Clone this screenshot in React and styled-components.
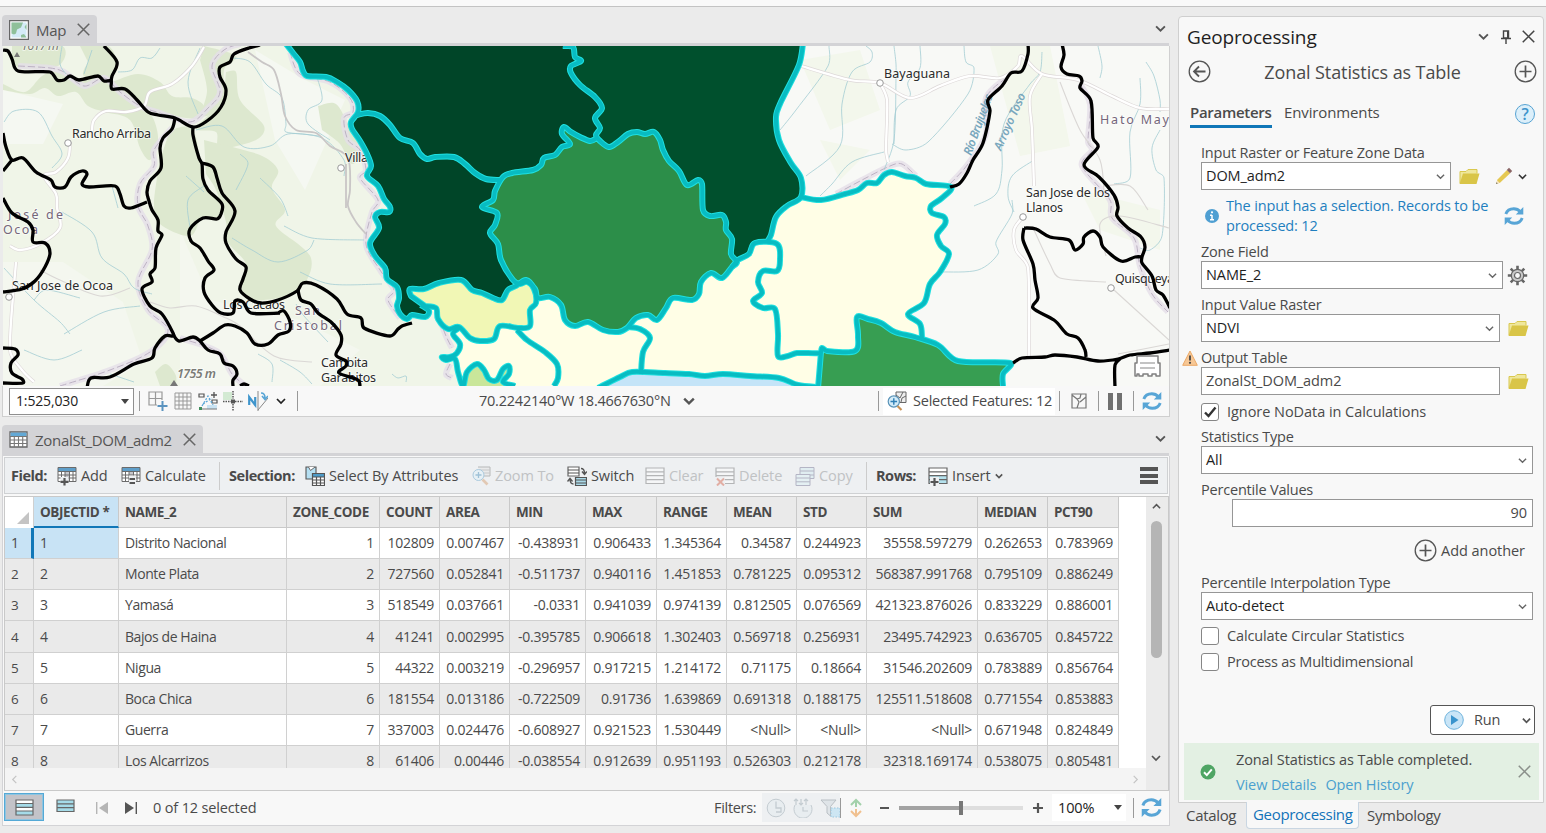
import React from 'react';
import styled, { createGlobalStyle } from 'styled-components';

const Global = createGlobalStyle`
  * { box-sizing: border-box; }
  body {
    margin: 0;
    overflow: hidden;
    background: #ebebeb;
    color: #4a4a4a;
    font: 14.5px/20px "Open Sans", "Noto Sans", sans-serif;
    letter-spacing: -0.15px;
    white-space: nowrap;
  }
  svg { display: block; flex: none; }
`;

/* ---------- icons ---------- */

const Icon = ({ s = 20, w, h, children, ...rest }) => (
  <svg width={w || s} height={h || s} viewBox={`0 0 ${w || s} ${h || s}`} fill="none" {...rest}>{children}</svg>
);
const Chevron = ({ c = '#555', w = 1.7, s = 10 }) => (
  <svg width={s} height={s} viewBox="0 0 10 10" fill="none"><path d="M1 3l4 4 4-4" stroke={c} strokeWidth={w} /></svg>
);
const Cross = ({ s = 13, c = '#666', w = 1.4 }) => (
  <svg width={s} height={s} viewBox="0 0 12 12" fill="none"><path d="M.7.7l10.6 10.6M11.3.7L.7 11.3" stroke={c} strokeWidth={w} /></svg>
);
const MapTabIcon = () => (
  <Icon>
    <path d="M.6.6h18.8v18.8H.6z" fill="#fff" stroke="#666" strokeWidth="1.2" />
    <path d="M2.500 2.500h15v15h-15z" fill="#d4ebf7" />
    <path d="M2.500 2.500H14l-2 5-4 2-1 4-2 1-2.500-1zM12 15l3-1 2.500 3.500H12zM17.500 4l-2 3 2 3z" fill="#8fc09a" />
  </Icon>
);
const TableIcon = () => (
  <Icon w={19} h={17}>
    <path d="M1 1h17v15H1z" fill="#fff" stroke="#666" strokeWidth="1.300" />
    <path d="M1.600 1.600h15.800V5H1.600z" fill="#63a9d6" />
    <path d="M1 5.500h17M1 9h17M1 12.500h17M5.300 5v11M9.500 5v11M13.700 5v11" stroke="#777" strokeWidth="1.100" />
  </Icon>
);
const FieldIcon = ({ calc }) => (
  <Icon>
    <path d="M1 1.500h18v14H1z" fill="#fff" />
    <path d="M1 1.500h18v4H1z" fill="#5f9fca" />
    <path d="M8 5.500h5v10H8z" fill="#c7c7cc" />
    <path d="M1 1.500h18v14H1zM1 5.500h18M1 9h18M1 12h18M4.500 5.500v10M8 5.500v10M12.500 5.500v10M16 5.500v10" stroke="#6b6b6b" />
    {calc ? <path d="M8 9.500h7v10H8z" fill="#eef0f2" /> : <path d="M3.500 11h8v9h-8z" fill="#eef0f2" />}
    {calc ? <path d="M8.500 13h5.500M8.500 17h5.500" stroke="#555" strokeWidth="2" /> : <path d="M7.500 12v7.500M3.500 15.800h8" stroke="#555" strokeWidth="2.200" />}
  </Icon>
);
const SelectAttrIcon = () => (
  <Icon>
    <path d="M8 13H1V1h10v6" fill="#b5dff2" stroke="#555" strokeWidth="1.100" />
    <path d="M3.500 1l2 3.500L10 1" fill="#fff" stroke="#666" />
    <path d="M7.500 7.500h12v12h-12z" fill="#fff" />
    <path d="M7.500 7.500h12V11h-12z" fill="#4d9bc8" />
    <path d="M7.500 7.500h12v12h-12zM7.500 11h12M7.500 14h12M7.500 17h12M11.500 11v8.500M15.500 11v8.500" stroke="#555" strokeWidth="1.200" />
  </Icon>
);
const ZoomToIcon = () => (
  <Icon opacity=".45">
    <path d="M7 1h12v9H8" fill="#e4e4e4" stroke="#777" /><path d="M9 4h10M9 7h10" stroke="#999" />
    <circle cx="7.500" cy="9" r="5.500" fill="#ddf0fa" stroke="#5a9cc5" />
    <path d="M4.500 9h6M7.500 6v6" stroke="#3f89b8" strokeWidth="1.300" /><path d="M11.500 13.500l5 5" stroke="#d59b6b" strokeWidth="2.600" />
  </Icon>
);
const SwitchIcon = () => (
  <Icon>
    <path d="M1 1h11v9H1z" fill="#fff" stroke="#666" strokeWidth="1.200" /><path d="M1 4h11M1 7h11" stroke="#555" strokeWidth="1.200" />
    <path d="M8.500 11.500h11v8h-11z" fill="#a9d9e8" stroke="#555" strokeWidth="1.200" /><path d="M8.500 14h11M8.500 17h11" stroke="#555" />
    <path d="M14 2.500c3 0 3.500 2 3.500 5M15 5.500l2.500 3 2.300-3M6.500 18c-3 0-3.500-2-3.500-5M.5 15.500L3 12.300l2.500 3.200" stroke="#555" strokeWidth="1.400" />
  </Icon>
);
const RowsIcon = ({ kind }) => (
  <Icon opacity={kind === 'insert' ? 1 : 0.42}>
    {kind === 'copy' ? (
      <>
        <path d="M5 1.500h14v11H5z" fill="#cdeaf1" stroke="#668" /><path d="M5 5h14M5 9h14" stroke="#668" />
        <path d="M1 8.500h14v11H1z" fill="#d8f0f5" stroke="#668" /><path d="M1 12h14M1 15.800h14" stroke="#668" />
      </>
    ) : (
      <>
        <path d="M1 2h18v15.500H1z" fill="#fff" />
        {kind === 'insert' && <path d="M1 9.500h18v7.500H1z" fill="#b5e2ee" />}
        <path d="M1 2h18v15.500H1zM1 5.800h18M1 9.700h18M1 13.600h18" stroke="#666" strokeWidth="1.200" />
        {kind === 'insert' && <><path d="M2 11h9v9H2z" fill="#eef0f2" /><path d="M6.500 12v8M2.500 16h8" stroke="#555" strokeWidth="2.200" /></>}
        {kind === 'delete' && <><path d="M0 11h10v9H0z" fill="#eef0f2" /><path d="M2 12.500l7 7M9 12.500l-7 7" stroke="#d2553b" strokeWidth="2" /></>}
      </>
    )}
  </Icon>
);
const Refresh = ({ s = 20 }) => (
  <svg width={s} height={s} viewBox="0 0 20 20" fill="none">
    <path d="M1.800 8c1.200-3.500 4.300-5.300 8-5.300 2.800 0 4.900 1.100 6.600 3M18.200 12c-1.200 3.500-4.300 5.300-8 5.300-2.800 0-4.900-1.100-6.600-3" stroke="#58a5d6" strokeWidth="2.900" />
    <path d="M19.300 1v7.500h-7.500zM.7 19v-7.500h7.500z" fill="#58a5d6" />
  </svg>
);
const Folder = () => (
  <Icon w={21} h={17}>
    <path d="M1 15V3.500h6l2-2h9v4" fill="#efe79c" stroke="#d9c84f" />
    <path d="M.5 16L4 5.500h16.500L17.500 16z" fill="#d9c548" />
  </Icon>
);
const Pencil = () => (
  <Icon w={18} h={18}>
    <path d="M1 17l1.500-4.500L12 3l3.200 3.200L5 15.800z" fill="#e5c852" /><path d="M11.800 3L14 .8l3.200 3.200-2.200 2.200z" fill="#8b6666" />
    <path d="M1 17l1.200-3.500 2.400 2.200z" fill="#f5e3c0" /><path d="M1 17l.6-1.700 1.100 1.100z" fill="#666" />
  </Icon>
);
const Gear = () => (
  <Icon s={21}>
    <g stroke="#666" strokeWidth="2.600"><path d="M10.500.8v19.400M.8 10.500h19.400M3.700 3.700l13.600 13.600M17.300 3.700L3.700 17.300" /></g>
    <circle cx="10.500" cy="10.500" r="6.200" fill="#c9c9c9" stroke="#666" strokeWidth="1.200" /><circle cx="10.500" cy="10.500" r="3" fill="#f8f8f8" stroke="#666" strokeWidth="1.200" />
  </Icon>
);
const CirclePlus = () => (
  <Icon s={23}><circle cx="11.500" cy="11.500" r="10.300" stroke="#555" strokeWidth="1.300" /><path d="M11.500 5.500v12M5.500 11.500h12" stroke="#555" strokeWidth="1.700" /></Icon>
);
const CircleBack = () => (
  <Icon s={23}><circle cx="11.500" cy="11.500" r="10.300" stroke="#555" strokeWidth="1.300" /><path d="M17.500 11.500H6.500M11 6.500l-5 5 5 5" stroke="#555" strokeWidth="1.800" /></Icon>
);
const Magnifier = () => (
  <Icon>
    <path d="M9 1h10v10.500H9z" fill="#eee" stroke="#666" /><path d="M9 4l4 3 3-6M14 11l1-4 4-2" stroke="#666" />
    <circle cx="6.800" cy="10.500" r="5.600" fill="#d2ebf8" stroke="#5a93b8" strokeWidth="1.200" />
    <path d="M3.500 10.500h6.600M6.800 7.200v6.600" stroke="#2f7fb5" strokeWidth="1.400" /><path d="M10.500 15l4 4" stroke="#c89155" strokeWidth="2.200" />
  </Icon>
);

/* ---------- map ---------- */

/* Turns a polyline ("M x y L x y ...") into a Catmull-Rom curve through the same points. */
const curve = (d) => d.split('M').filter(Boolean).map((part) => {
  const closed = /z/i.test(part);
  const n = part.match(/-?[\d.]+/g).map(Number);
  const p = [];
  for (let i = 0; i < n.length; i += 2) p.push([n[i], n[i + 1]]);
  let out = `M${p[0].join(' ')}`;
  for (let i = 0; i < p.length - 1; i += 1) {
    const a = p[i - 1] || p[i];
    const b = p[i];
    const c = p[i + 1];
    const e = p[i + 2] || c;
    const max = Math.hypot(c[0] - b[0], c[1] - b[1]) / 2.6;
    const ctrl = (o, dx, dy, sign) => {
      const len = Math.hypot(dx, dy) || 1;
      const k = Math.min(len / 6, max) / len;
      return `${(o[0] + sign * dx * k).toFixed(1)} ${(o[1] + sign * dy * k).toFixed(1)}`;
    };
    out += `C${ctrl(b, c[0] - a[0], c[1] - a[1], 1)} ${ctrl(c, e[0] - b[0], e[1] - b[1], -1)} ${c.join(' ')}`;
  }
  return closed ? `${out}Z` : out;
}).join('');

const cyanLines = [
  'M286 44L293 53 300 62 303 71 307 76 326 77 337 82 348 90 357 101 358 112 351 122 352 129 360 141 367 154 371 166 367 176 378 186 384 199 390 207 389 212 380 212 375 217 379 228 370 243 375 256 385 268 387 279 397 287 399 298 397 306 400 314 407 319 412 315 425 317 429 311 421 305',
  'M357 115L368 113 380 116 390 125 400 138 413 143 420 154 427 159 435 157 454 157 465 164 475 173 486 179 500 180',
  'M563 46L573 47 575 57 581 61 571 66 571 73 580 85 595 97 602 108 595 118 600 128 596 135 600 141 609 147 618 142 628 134 637 132 645 134 654 132 660 140 663 150 669 161 679 171 687 185 698 180 702 184 703 210 710 216 722 215 726 222 726 230 732 239 731 254 737 262 732 267 722 278 711 273 701 282 699 294 692 300 673 298 666 308 657 320 648 315 636 318 627 328 618 332 603 330 588 322 575 326 565 320 561 305 550 297 538 298 535 289 527 282 520 284 513 280 501 260 498 244 490 233 495 225 497 213 482 207 493 200 495 191 503 177 512 173 533 170 541 165 544 158 555 155 562 147 570 144 562 134 564 127 571 132 580 137 590 141 597 138',
  'M411 296L410 289 424 289 439 283 461 280 472 290 482 293 493 298 502 300 508 290 516 286 526 280 534 289 536 303 530 310 530 326 519 328 500 326 494 339 480 341 470 338 459 327 448 329 438 319 436 308 425 306z',
  'M459 328L453 334 460 344 457 353 450 357 442 357 446 360 455 359 458 372 463 386 467 372 477 364 484 370 489 379 497 380 503 369 509 366 509 374 503 382 515 386',
  'M517 330L527 340 545 352 557 364 558 378 554 386',
  'M628 327L640 329 650 338 643 352 641 374',
  'M732 267L738 260 749 254 755 243 777 244 780 260 777 271 763 271 758 282 762 293 753 301 763 308 775 309 778 334 778 356 788 356 797 353 820 353 822 348 827 351 855 351 858 335 857 317 868 319 881 323 895 332 915 337 938 345 958 361 1010 363 1003 374 1003 386',
  'M803 44L799 65 780 104 776 117 779 140 791 163 801 178 801 197 787 206 776 217 771 235 767 242',
  'M801 197L821 200 845 194 858 190 867 183 877 183 884 175 892 172 905 176 916 178 926 184 951 187 942 198 931 206 932 213 944 217 945 224 937 235 941 246 949 254 940 272 930 284 924 303 908 314 920 324 922 338',
  'M821 352L818 388M598 388L620 377 632 372 665 373 689 374 705 376 723 374 750 376 779 378 798 385 817 387',
].map(curve);
const blackLines = [
  'M3 50L8 51 12 59 18 71 50 72 57 80 64 80 70 76 79 80 98 76 104 81 111 81 112 89 125 89 137 100 148 112 158 115 175 118 193 127 207 121 221 107 226 90 220 77 220 67 230 62 234 54 249 48 260 45',
  'M104 46L117 62 112 76 111 82',
  'M175 118L172 129 163 138 160 148 161 168 150 181 147 192 149 201 152 210 158 220 158 231 162 235 156 248 155 268 150 274 152 282 142 289 150 306 162 314 173 333 173 336 165 336 155 348 152 358 134 364 110 377 91 378 87 388',
  'M3 133L6 147 12 160 23 158 36 172 51 180 55 187 65 187 71 177 82 171 87 174 82 184 89 187 115 186 120 194 124 206 131 208 147 202M12 160L3 171',
  'M193 127L193 135 199 158 202 164 203 179 208 190 222 204 221 214 217 219 203 218 190 229 191 241 200 248 208 261 214 270 205 278 204 292 212 305 221 313 233 313 235 301 243 302 251 313 280 313M278 313L284 311 290 322 289 331 278 335 268 344 255 344 247 333 235 326 225 325 213 333 200 341',
  'M202 163L213 167 217 178 222 193 235 211 226 232 226 243 236 259 246 267 243 279 240 290 250 299 261 303 278 300 297 291 303 283 316 285 337 299 347 314 361 318 364 328 390 336 398 329 402 326 412 323',
  'M298 290L301 300 311 304 318 313 332 323 341 335 341 344 336 355 346 361 346 366 339 373 358 380 360 388',
  'M173 334L179 341 193 337 200 341 208 350 220 354 224 363 233 366 237 374 233 380 233 386M240 386L244 384 249 386',
  'M3 198L12 213 28 222 33 230 33 242 45 243 50 253 45 267 35 281 22 289 3 292',
  'M3 348L15 349 18 355 11 363 12 373 22 379 23 383 3 383',
  'M1028 44L1028 54 1022 71 1011 73 1002 86 988 100 990 111 983 143 973 160 967 173 959 184 950 187',
  'M1062 44L1064 55 1061 67 1067 74 1079 76 1082 81 1080 88 1091 101 1093 138 1098 147 1084 165 1099 177 1114 195 1118 207 1117 216 1128 228 1141 237 1145 247 1142 257 1142 263 1152 276 1156 290 1163 295 1170 308',
  'M1024 228L1036 229 1050 237 1069 240 1075 250 1083 244 1084 237 1093 231 1100 237 1103 247 1121 261 1135 257 1143 257',
  'M1024 228L1023 240 1033 264 1035 280 1038 298 1033 308 1054 320 1067 334 1078 338 1085 350 1086 357',
  'M1013 363L1022 358 1045 357 1055 355 1077 357 1098 361 1118 359 1130 355 1150 353 1170 350M1121 358L1115 365 1115 388',
].map(curve);
const forest = [
  'M3 84L25 92 42 76 60 70 78 78 92 76 112 84 128 94 143 110 153 118 158 140 150 160 140 148 130 120 105 112 88 106 76 92 58 96 45 88 30 94 3 90z',
  'M12 46L62 46 58 66 20 68 12 58z',
  'M80 46L108 46 116 62 110 78 84 76 88 62z',
  'M112 82L138 74 160 82 172 96 192 98 204 106 200 118 178 117 158 114 140 104 120 90z',
  'M204 46L236 56 224 70 224 104 202 116 207 90 200 60z',
  'M226 72L236 72 240 100 264 126 256 140 220 148 216 132 196 128 223 104z',
  'M170 130L192 128 200 160 204 184 222 204 216 219 202 217 190 236 160 224 154 204 160 160z',
  'M204 140L260 155 278 170 272 188 285 210 276 226 311 258 296 292 250 300 240 284 246 264 228 242 226 222 216 190 206 174z',
  'M318 106L336 104 350 128 364 148 352 164 340 144 322 130z',
  'M155 372L166 364 176 376 173 388 160 386z',
].map(curve);
const roads = [
  'M204 47L192 66 172 84 150 92 144 106 126 112 106 111 94 120 92 131M70 142L68 158 56 172 44 176 56 194 57 208 60 228 40 244 20 250 10 246M16 262L10 350 22 370 34 382',
  'M798 65L850 80 880 83 910 98 940 86 970 76 1000 78 1018 66 1022 56 1042 74 1078 80 1112 96 1140 108 1169 109M880 83L887 100 886 150 888 162',
  'M1042 74L1030 96 1032 130 1034 186M1022 218L1014 230 1016 250 1028 268 1029 358',
].map(curve);
const admins = [
  'M18 66L50 68 64 72 84 86 104 78 120 92 140 106 160 113 190 122 208 108 220 92 212 66 224 50 240 44M172 128L154 150 154 166 140 184 138 206 148 226 152 250 138 282 148 310 168 330 150 352 110 370 60 386M180 338L218 352 232 374 246 386',
  'M290 52L300 74 330 82 350 98 353 112 344 118 348 140 360 150 366 170 360 178 378 200 372 212 366 244 380 270 394 290 388 300 400 318M440 320L446 336 452 348M450 364L446 374 452 378',
  'M836 194L862 180 890 166 902 164 916 176M950 184L968 164 986 134 986 98 1006 78M1080 84L1090 104 1088 142 1092 150 1082 166 1110 200 1112 218 1134 238 1140 266 1152 294 1168 312',
].map(curve);
const rivers = [
  'M62 46L60 64 66 74M92 50L84 74M160 48L152 58 140 58 132 70 118 72M200 48L188 82 198 114M4 122L14 111 38 112 52 136 62 154 52 168',
  'M233 58L250 62 266 84 282 98 286 124 286 132 322 138 344 160 344 176M316 74L322 100 308 110 308 124 330 140M196 130L222 126 244 147 270 146 288 134 320 136M240 154L248 164 236 190M112 186L118 208M186 176L204 192M260 178L280 198 288 216M62 212L92 232 102 258 124 274 134 288 152 294',
  'M4 268L34 300 60 322 70 334M34 300L46 290 80 298M64 334L104 312 140 306M24 350L54 360 82 350M110 374L134 382M204 186L188 200 190 228M232 238L252 250 278 262 308 250 314 240M284 226L312 238 364 240M300 272L330 284 382 284M296 304L304 316 328 342M258 354L272 364 272 382M280 360L300 372 312 384M392 374L398 378 406 376 406 382',
  'M829 46L828 66 796 110 780 130M866 46L872 52 870 62 852 72 842 104 840 146 806 176M894 46L896 64 896 78 894 140 884 170M920 46L920 68 908 82 910 96 896 110 894 144M964 46L966 62 974 68 968 94 928 142 906 150 892 144M884 152L852 162 832 184 820 196',
  'M1042 52L1040 72 1030 84 1004 124 1002 170 996 194 974 206M1098 46L1102 66 1100 78M1146 62L1154 76 1160 100 1160 112M1140 78L1140 104 1130 132 1130 178 1114 184M1012 200L1012 214 996 242 998 254 978 270 942 272M1160 130L1152 148 1156 170 1164 178 1162 236 1150 250 1140 248M1034 160L1012 176 1008 196 1014 212',
].map(curve);
const westGreen = curve('M286 44L293 53 300 62 303 71 307 76 326 77 337 82 348 90 357 101 358 112 351 122 352 129 360 141 367 154 371 166 367 176 378 186 384 199 390 207 389 212 380 212 375 217 379 228 370 243 375 256 385 268 387 279 397 287 399 298 397 306 400 314 407 319 412 315 425 317 429 311 421 305 415 294 440 290 461 290 502 300 528 292 560 280 560 200 620 140 620 44z');
const eastGreen = curve('M573 44L575 57 581 61 571 66 571 73 580 85 595 97 602 108 595 118 600 128 600 150 620 200 700 250 732 267 745 256 755 243 767 243 771 235 776 217 787 206 801 197 801 178 791 163 779 140 776 117 780 104 799 65 803 44z');
const cream = curve('M424 306L430 300 461 320 502 318 532 306 560 280 640 270 700 250 732 267 738 260 749 254 755 243 767 243 771 235 776 217 787 206 801 197 821 200 845 194 858 190 867 183 877 183 884 175 892 172 905 176 916 178 926 184 951 187 942 198 931 206 932 213 944 217 945 224 937 235 941 246 949 254 940 272 930 284 924 303 908 314 920 324 922 338 860 386 463 386 458 372 455 359 442 357 450 357 457 353 460 344 453 334 459 328z');
const midGreen = curve('M597 138L600 141 609 147 618 142 628 134 637 132 645 134 654 132 660 140 663 150 669 161 679 171 687 185 698 180 702 184 703 210 710 216 722 215 726 222 726 230 732 239 731 254 737 262 732 267 722 278 711 273 701 282 699 294 692 300 673 298 666 308 657 320 648 315 636 318 627 328 618 332 603 330 588 322 575 326 565 320 561 305 550 297 538 298 535 289 527 282 520 284 513 280 501 260 498 244 490 233 495 225 497 213 482 207 493 200 495 191 503 177 512 173 533 170 541 165 544 158 555 155 562 147 570 144 562 134 564 127 571 132 580 137 590 141z');
const towns = [[68, 143], [341, 168], [880, 83], [1023, 217], [1111, 288], [9, 297]];
const MapLabel = ({ x, y, w, children, ...rest }) => (
  <text x={x} y={y} textLength={w} fill="#2b2b2b" stroke="#fff" strokeOpacity=".55" strokeWidth="2" paintOrder="stroke" {...rest}>{children}</text>
);
const AreaLabel = (p) => <MapLabel fill="#75667a" fontSize="12.5" {...p} />;

const MapCanvas = () => (
  <svg width="1166" height="340" viewBox="3 46 1166 340" fill="none" strokeLinejoin="round" fontFamily='"Noto Sans", sans-serif' fontSize="12.5" letterSpacing="0">
    <path d="M3 46h460v340H3z" fill="#f0f5e8" />
    <path d="M770 46h399v340H770z" fill="#f8f9f6" />
    <path d="M3 262h60l60 40 20 60-40 24H3zM180 230l30 70 90 20 60 30-40 36H180z" fill="#f4f7ef" />
    <path d="M3 90l60 14-20 40H3zM255 50l50 30 40 20-40 90-30-50z" fill="#f5f8f2" />
    <path d="M800 60l60-10 20 60-50 20zM990 46h60l20 100-50 10zM1080 190l80 20v40l-60-20zM820 140l50 10-30 30z" fill="#f3f7ec" />
    {forest.map((d) => <path key={d} d={d} fill="#dde8cf" />)}
    <g stroke="#e5dfe9" strokeWidth="6" opacity=".8">{admins.map((d) => <path key={d} d={d} />)}</g>
    <g stroke="#bdb2c4" strokeWidth="1" strokeDasharray="7 3">{admins.map((d) => <path key={d} d={d} />)}</g>
    <g stroke="#a3cdd3" strokeWidth=".8">{rivers.map((d) => <path key={d} d={d} />)}</g>
    <g stroke="#ddd8d8" strokeWidth="3.600">{roads.map((d) => <path key={d} d={d} />)}</g>
    <g stroke="#fff" strokeWidth="2.300">{roads.map((d) => <path key={d} d={d} />)}</g>
    <path d={curve('M248 52L262 62 274 70 281 94 285 116 296 130 316 133 330 146 348 158 350 190 348 206 356 222 366 234M346 164L346 208')} stroke="#c9c6c6" strokeWidth="1.800" />
    <path d={curve('M150 302L170 308 196 306 226 318 240 326 274 356 312 362M40 270L60 280 100 296 130 288M1060 82L1080 130 1100 160 1104 194M1034 230L1050 264 1060 278 1106 282M1114 290L1169 340M1106 256L1100 224 1120 216 1169 228M1104 186L1130 186 1148 210M1118 354L1169 344')} stroke="#dad7d5" strokeWidth="1.100" />
    {towns.map(([x, y]) => <circle key={x} cx={x} cy={y} r="3.300" fill="#fff" stroke="#999" />)}
    <path d="M14 57l3-5 3 5zM170 386l4-6 4 6z" fill="#777" />

    <AreaLabel x="8" y="219" w="55">José de</AreaLabel>
    <AreaLabel x="3" y="234" w="35">Ocoa</AreaLabel>
    <AreaLabel x="295" y="315" w="25">San</AreaLabel>
    <AreaLabel x="274" y="330" w="68">Cristobal</AreaLabel>
    <AreaLabel x="1100" y="124" w="69">Hato May</AreaLabel>
    <MapLabel x="72" y="138" w="79">Rancho Arriba</MapLabel>
    <MapLabel x="345" y="162" w="23">Villa</MapLabel>
    <MapLabel x="12" y="290" w="101">San Jose de Ocoa</MapLabel>
    <MapLabel x="223" y="309" w="62">Los Cacaos</MapLabel>
    <MapLabel x="321" y="367" w="47">Cambita</MapLabel>
    <MapLabel x="321" y="382" w="55">Garabitos</MapLabel>
    <MapLabel x="884" y="78" w="66">Bayaguana</MapLabel>
    <MapLabel x="1026" y="197" w="84">San Jose de los</MapLabel>
    <MapLabel x="1026" y="212" w="37">Llanos</MapLabel>
    <MapLabel x="1115" y="283" w="59">Quisqueya</MapLabel>
    <MapLabel x="177" y="378" w="39" fill="#7b7b76" fontStyle="italic" fontWeight="600">1755 m</MapLabel>
    <MapLabel x="21" y="49.500" w="38" fill="#7b7b76" fontStyle="italic">1617 m</MapLabel>
    <g fill="#79a7bd" fontStyle="italic" fontWeight="600" fontSize="12">
      <text textLength="64" transform="translate(971 156) rotate(-70)">Río Brujuelas</text>
      <text textLength="61" transform="translate(1001 151) rotate(-66)">Arroyo Toso</text>
    </g>

    <g>
      <path d={westGreen} fill="#004528" />
      <path d={eastGreen} fill="#00502d" />
      <path d={cream} fill="#fffee6" />
      <path d={midGreen} fill="#2c8e49" />
      <path d={cyanLines[3]} fill="#f1f7b5" />
      <path d="M463 386L467 372 477 364 484 370 489 379 497 380 503 369 509 366 503 382 515 386z" fill="#c9e69a" />
      <path d="M821 352L855 351 858 335 857 317 868 319 881 323 895 332 915 337 938 345 958 361 1010 363 1003 374 1003 388H818z" fill="#379e52" />
      <path d="M598 388L632 372 705 376 779 378 817 388z" fill="#c4e4f8" />
    </g>
    <g stroke="#1fe0e0" strokeWidth="6">{cyanLines.map((d) => <path key={d} d={d} />)}</g>
    <g stroke="#08bcc2" strokeWidth="4">{cyanLines.map((d) => <path key={d} d={d} />)}</g>
    <g stroke="#000" strokeWidth="3.300">{blackLines.map((d) => <path key={d} d={d} />)}</g>
    <path d="M1135 376v-13h2v-7h21v7h2v13h-4v-2h-4v2h-4v-2h-5v2h-4v-2h-2v2z" fill="#fff" stroke="#808080" strokeWidth="1.500" />
    <path d="M1140 363h15M1140 368h15" stroke="#888" strokeWidth="1.200" />
  </svg>
);

/* ---------- shell ---------- */

const Shell = styled.div`
  width: 1546px; height: 833px;
  display: grid; grid-template: 7px 1fr / 1178px 1fr;
`;
const Ribbon = styled.div`
  grid-column: 1 / 3; background: #f9f9f9; border-bottom: 1px solid #c3c3c3;
`;
const LeftColumn = styled.div`padding: 8px 0 0 2px; width: 1169px;`;
const DocTabs = styled.div`
  display: flex; height: 31px; justify-content: space-between; align-items: flex-start;
  border-bottom: 3px solid #d3d3d6; padding-right: 3px;
  > svg { margin-top: 8px; }
`;
const DocTab = styled.div`
  display: flex; align-items: center; height: 29px; width: ${(p) => p.$w}px;
  padding-left: 7px; gap: 7px;
  background: #d3d3d6; border-radius: 4px 4px 0 0; font-size: 15px; color: #555;
  svg:last-child { margin-left: ${(p) => p.$gap}px; }
`;
const TabText = styled.span`width: ${(p) => p.$w}px; letter-spacing: -0.3px;`;
const MapPane = styled.div`padding-left: 1px; border-right: 1px solid #d0d0d0; width: 1168px;`;
const StatusBar = styled.div`
  display: flex; align-items: center; height: 31px; background: #f8f8f8;
  border: 1px solid #cfcfcf; border-top: 0; width: 1168px; padding-left: 6px;
`;
const ScaleBox = styled.div`
  display: flex; align-items: center; justify-content: space-between; font-size: 14px;
  width: 125px; height: 27px; border: 1px solid #8f8f8f; background: #fff; padding: 0 4px 0 6px; color: #222;
`;
const Caret = styled.i`border: 4px solid transparent; border-top: 5px solid #444; border-bottom: 0;`;
const Rule = styled.i`width: 1px; height: ${(p) => p.$h || 20}px; background: ${(p) => p.$c || '#999'}; margin: 0 ${(p) => p.$r || 0}px 0 ${(p) => p.$l || 0}px;`;
const Gap = styled.i`width: ${(p) => p.$w}px;`;
const StatusIcons = styled.div`display: flex; align-items: center; gap: 5px; > svg:last-child { margin-left: 3px; }`;
const Coordinates = styled.div`
  display: flex; align-items: center; justify-content: space-between; width: 216px; margin: 0 175px 0 181px; letter-spacing: -0.23px;
`;
const SelectedCount = styled.div`
  display: flex; align-items: center; gap: 6px; width: 172px; height: 27px; background: #fff; padding-left: 4px; letter-spacing: -0.22px;
`;
const Pause = styled.i`width: 14px; height: 17px; border: solid #707070; border-width: 0 5px;`;

/* ---------- attribute table ---------- */

const Dock = styled.div`padding-top: 8px;`;
const TablePane = styled.div`
  width: 1168px; height: 370px; border: 1px solid #d3d3d6; border-top: 0; padding: 1px 0 0 1px; background: #f8f8f8;
`;
const Toolbar = styled.div`
  display: flex; align-items: center; height: 37px; background: #eef0f2; border: 1px solid #cfd1d3; padding-left: 6px; margin: 0 1px 2px 0;
`;
const ToolGroup = styled.b`width: ${(p) => p.$w}px; letter-spacing: -0.45px;`;
const Tool = styled.div`
  display: flex; flex: none; align-items: center; gap: 4px; width: ${(p) => p.$w}px;
  color: ${(p) => (p.$off ? '#c0c2c4' : '#4a4a4a')}; letter-spacing: -0.1px;
`;
const MenuBars = styled.i`width: 18px; height: 17px; border: solid #555; border-width: 4px 0; display: grid; align-items: center;
  &::before { content: ''; height: 4px; background: #555; }
`;
const GridFrame = styled.div`
  display: grid; grid-template: 271px 22px / 1141px 22px; border: 1px solid #c9c9c9; width: 1165px; height: 295px; background: #fff;
`;
const Viewport = styled.div`overflow: hidden;`;
const GridRow = styled.div`
  display: grid; height: ${(p) => p.$h}px;
  grid-template-columns: 29px 85px 168px 93px 60px 70px 76px 71px 70px 70px 70px 111px 70px 71px;
  width: 1114px; background: ${(p) => (p.$alt ? '#eaeaea' : '#fff')}; font-size: 14px; letter-spacing: -0.25px;
`;
const Head = styled.div`
  font-weight: 700; font-size: 13.5px; letter-spacing: -0.42px; display: flex; align-items: center; background: #eaeaea;
  border: solid #c9c9c9; border-width: 0 1px 1px 0; padding-left: 6px;
  ${(p) => p.$key && 'background: #c8e3f5; border-bottom: 2px solid #1077b8;'}
`;
const Cell = styled.div`
  display: flex; align-items: center; justify-content: ${(p) => (p.$left ? 'flex-start' : 'flex-end')};
  border: solid #d0d0d0; border-width: 0 1px 1px 0; padding: 0 5px 0 6px;
  ${(p) => p.$left && 'letter-spacing: -0.42px;'}
  ${(p) => p.$on && 'background: #c8e3f5;'}
  ${(p) => p.$mark && 'border-right: 3px solid #1077b8;'}
  ${(p) => p.$index && 'background: #eaeaea; font-size: 13.5px;'}
`;
const Corner = styled.div`
  display: flex; align-items: flex-end; justify-content: flex-end; padding: 0 4px 4px; border-right: 1px solid #d0d0d0;
`;
const VScroll = styled.div`
  grid-row: 1 / 3; grid-column: 2; background: #ebebeb; display: flex; flex-direction: column; align-items: center; padding: 5px 2px 27px 0; justify-content: space-between;
  svg:first-child { transform: rotate(180deg); }
`;
const Thumb = styled.i`width: 11px; height: 137px; margin-bottom: 86px; border-radius: 6px; background: #b5b5b5;`;
const HScroll = styled.div`
  background: #f4f4f4; display: flex; align-items: center; justify-content: space-between; padding: 0 6px 0 5px;
  svg:first-child { transform: rotate(90deg); } svg:last-child { transform: rotate(-90deg); }
`;
const TableFooter = styled.div`display: flex; align-items: center; height: 33px;`;
const ViewButton = styled.div`
  width: 40px; height: 28px; display: grid; place-items: center; margin-top: -1px;
  ${(p) => p.$on && 'background: #c3c3c8; border: 1px solid #54a9d6; box-shadow: inset 0 0 0 1px #8fc4e0;'}
  ${(p) => p.$up && 'padding-bottom: 3px; margin-left: 1px;'}
`;
const StatusText = styled.div`width: 544px; margin-left: 16px; padding-top: 1px;`;
const FilterLabel = styled.div`width: 48px; padding-top: 1px; margin-left: 17px; letter-spacing: -0.3px;`;
const Sign = styled.i`width: 9px; height: 2px; margin-left: 17px; background: #555;`;
const FilterIcons = styled.div`display: flex; align-items: center; gap: 7px; width: 78px; height: 29px; padding-left: 4px; background: #eef0f2;`;
const Slider = styled.div`
  display: flex; align-items: center; justify-content: center; width: 124px; height: 14px; margin: 0 10px;
  background: linear-gradient(90deg, #a3a3a3 50%, #dedede 50%) center / 100% 4px no-repeat;
  &::after { content: ''; width: 4px; height: 14px; background: #777; }
`;
const ZoomValue = styled.div`display: flex; align-items: center; justify-content: space-between; width: 74px; height: 27px; background: #fff; padding: 0 4px 0 6px; color: #222; margin-left: 9px;`;

const columns = ['OBJECTID *', 'NAME_2', 'ZONE_CODE', 'COUNT', 'AREA', 'MIN', 'MAX', 'RANGE', 'MEAN', 'STD', 'SUM', 'MEDIAN', 'PCT90'];
const records = [
  ['1', 'Distrito Nacional', '1', '102809', '0.007467', '-0.438931', '0.906433', '1.345364', '0.34587', '0.244923', '35558.597279', '0.262653', '0.783969'],
  ['2', 'Monte Plata', '2', '727560', '0.052841', '-0.511737', '0.940116', '1.451853', '0.781225', '0.095312', '568387.991768', '0.795109', '0.886249'],
  ['3', 'Yamasá', '3', '518549', '0.037661', '-0.0331', '0.941039', '0.974139', '0.812505', '0.076569', '421323.876026', '0.833229', '0.886001'],
  ['4', 'Bajos de Haina', '4', '41241', '0.002995', '-0.395785', '0.906618', '1.302403', '0.569718', '0.256931', '23495.742923', '0.636705', '0.845722'],
  ['5', 'Nigua', '5', '44322', '0.003219', '-0.296957', '0.917215', '1.214172', '0.71175', '0.18664', '31546.202609', '0.783889', '0.856764'],
  ['6', 'Boca Chica', '6', '181554', '0.013186', '-0.722509', '0.91736', '1.639869', '0.691318', '0.188175', '125511.518608', '0.771554', '0.853883'],
  ['7', 'Guerra', '7', '337003', '0.024476', '-0.608927', '0.921523', '1.530449', '<Null>', '<Null>', '<Null>', '0.671948', '0.824849'],
  ['8', 'Los Alcarrizos', '8', '61406', '0.00446', '-0.038554', '0.912639', '0.951193', '0.526303', '0.212178', '32318.169174', '0.538075', '0.805481'],
];

function TableDock() {
  return (
    <Dock>
      <DocTabs>
        <DocTab $w={201} $gap={4}><TableIcon /><TabText $w={137}>ZonalSt_DOM_adm2</TabText><Cross /></DocTab>
        <Chevron s={11} />
      </DocTabs>
      <TablePane>
        <Toolbar>
          <ToolGroup $w={46}>Field:</ToolGroup>
          <Tool $w={64}><FieldIcon />Add</Tool>
          <Tool $w={98}><FieldIcon calc />Calculate</Tool>
          <Rule $h={28} $c="#ccc" $r={9} />
          <ToolGroup $w={76}>Selection:</ToolGroup>
          <Tool $w={166}><SelectAttrIcon />Select By Attributes</Tool>
          <Tool $w={96} $off><ZoomToIcon />Zoom To</Tool>
          <Tool $w={78}><SwitchIcon />Switch</Tool>
          <Tool $w={70} $off><RowsIcon />Clear</Tool>
          <Tool $w={80} $off><RowsIcon kind="delete" />Delete</Tool>
          <Tool $w={71} $off><RowsIcon kind="copy" />Copy</Tool>
          <Rule $h={28} $c="#ccc" $r={9} />
          <ToolGroup $w={52}>Rows:</ToolGroup>
          <Tool $w={212}><RowsIcon kind="insert" />Insert<Chevron s={8} w={2} /></Tool>
          <MenuBars />
        </Toolbar>
        <GridFrame>
          <Viewport>
            <GridRow $h={31}>
              <Corner><Icon s={12}><path d="M12 0v12H0z" fill="#c4c4c4" /></Icon></Corner>
              {columns.map((c, i) => <Head key={c} $key={i === 0}>{c}</Head>)}
            </GridRow>
            {records.map((r, n) => (
              <GridRow key={r[0]} $h={31.17} $alt={n % 2 === 1}>
                <Cell $left $on={n === 0} $mark={n === 0} $index={n > 0}>{r[0]}</Cell>
                {r.map((v, i) => <Cell key={columns[i]} $left={i < 2} $on={n === 0 && i === 0}>{v}</Cell>)}
              </GridRow>
            ))}
          </Viewport>
          <VScroll><Chevron s={9} /><Thumb /><Chevron s={10} /></VScroll>
          <HScroll><Chevron s={9} c="#c4c4c4" w={1.3} /><Chevron s={9} c="#c4c4c4" w={1.3} /></HScroll>
        </GridFrame>
        <TableFooter>
          <ViewButton $on><Icon w={19} h={17}><path d="M1 1h17v15H1z" fill="#fff" /><path d="M1 4.500h17v3.700H1zM1 12h17v4H1z" fill="#a5dbe8" /><path d="M1 1h17v15H1zM1 4.500h17M1 8.300h17M1 12h17" stroke="#666" strokeWidth="1.200" /></Icon></ViewButton>
          <ViewButton $up><Icon w={19} h={14}><path d="M1 1h17v11.500H1z" fill="#a5dbe8" /><path d="M1 1h17v11.500H1zM1 4.800h17M1 8.600h17" stroke="#666" strokeWidth="1.200" /></Icon></ViewButton>
          <Gap $w={11} />
          <Icon w={12} h={12}><path d="M.7 0v12" stroke="#b5b5b5" strokeWidth="1.400" /><path d="M12 0v12L3 6z" fill="#b5b5b5" /></Icon>
          <Gap $w={17} />
          <Icon w={12} h={12}><path d="M11.300 0v12" stroke="#555" strokeWidth="1.400" /><path d="M0 0v12l9-6z" fill="#555" /></Icon>
          <StatusText>0 of 12 selected</StatusText>
          <FilterLabel>Filters:</FilterLabel>
          <FilterIcons>
            <Icon opacity=".5"><circle cx="10" cy="10" r="8.800" fill="#e4ebef" stroke="#9aa9b2" /><path d="M10 3.500V10h5v4h-5" stroke="#9aa9b2" strokeWidth="1.300" /></Icon>
            <Icon opacity=".5"><path d="M2 7a9 9 0 1 0 16 0" fill="#e4ebef" stroke="#9aa9b2" /><path d="M3 7V1M1 3l2-2 2 2M8 1v6M6 5l2 2 2-2M13 7V1M11 3l2-2 2 2M10 9v4h5" stroke="#9aa9b2" strokeWidth="1.200" /></Icon>
            <Icon><path d="M1 2h15l-5.500 6.500V18L7 15V8.500z" fill="#dfe4e8" stroke="#b9bfc4" /><path d="M11 10h9v9h-9z" fill="#cde6f3" stroke="#9cc7df" strokeDasharray="1.500 1.500" /></Icon>
          </FilterIcons>
          <Rule $r={8} />
          <Icon w={14} h={20}><path d="M7 2v7M2 7l5-5 5 5" stroke="#a3d1ab" strokeWidth="2" /><path d="M7 11v7M2 13l5 5 5-5" stroke="#f0c08f" strokeWidth="2" /></Icon>
          <Sign />
          <Slider />
          <Icon s={10}><path d="M5 0v10M0 5h10" stroke="#555" strokeWidth="2.200" /></Icon>
          <ZoomValue>100%<Caret /></ZoomValue>
          <Rule $l={7} $r={7} />
          <Refresh s={21} />
        </TableFooter>
      </TablePane>
    </Dock>
  );
}

/* ---------- geoprocessing pane ---------- */

const RightColumn = styled.div`padding: 9px 2px 0 0;`;
const Pane = styled.div`
  width: 366px; height: 787px; background: #f8f8f8; border: 1px solid #cfcfcf; border-radius: 4px 4px 0 0; padding: 0 5px;
`;
const PaneTitle = styled.div`
  display: flex; align-items: center; height: 39px; font-size: 19px; color: #1f1f1f; letter-spacing: -0.14px; padding: 0 3px 0 3px;
  svg:first-of-type { margin: 0 12px 0 auto; } svg:last-child { margin-left: 11px; }
`;
const ToolHeader = styled.div`
  display: flex; align-items: center; justify-content: space-between; height: 31px; padding: 0 1px 0 4px; font-size: 18px; letter-spacing: -0.1px;
`;
const ParamTabs = styled.div`display: flex; align-items: center; height: 39px; padding: 15px 3px 0 6px; font-size: 15px; margin-bottom: 18px;`;
const ParamTab = styled.div`
  height: 28px; line-height: 25px; width: ${(p) => p.$w}px; margin-right: 12px; letter-spacing: -0.13px;
  ${(p) => p.$on && 'border-bottom: 3px solid #1077b8; font-weight: 600; letter-spacing: -0.3px;'}
`;
const Help = styled.div`
  margin-left: auto; width: 20px; height: 20px; border: 1.5px solid #56a3d3; border-radius: 50%; background: #dceffa; color: #3f95cc;
  display: grid; place-items: center; font-size: 16px; line-height: 16px; font-weight: 600;
`;
const Form = styled.div`padding: 0 5px 0 17px; height: 561px;`;
const FieldLabel = styled.div`
  height: 18px; line-height: 18px; margin-top: ${(p) => p.$mt || 0}px; letter-spacing: -0.2px;
  display: flex; align-items: center; gap: 3px; margin-left: ${(p) => (p.$warn ? -19 : 0)}px;
`;
const FieldRow = styled.div`display: flex; align-items: center; height: 28px;`;
const Box = styled.div`
  display: flex; align-items: center; justify-content: ${(p) => (p.$right ? 'flex-end' : 'space-between')};
  width: ${(p) => p.$w}px; height: 28px; margin-left: ${(p) => p.$ml || 0}px; margin-right: 8px;
  padding: 0 5px 0 4px; background: #fff; border: 1px solid #969696; color: ${(p) => (p.$dim ? '#4a4a4a' : '#1f1f1f')};
  letter-spacing: -0.1px;
`;
const Info = styled.div`
  display: flex; align-items: center; height: 52px; color: #1f7fbf; line-height: 20px; padding-left: 4px;
  span { width: 278px; margin-left: 7px; }
`;
const CheckRow = styled.div`display: flex; align-items: center; gap: 8px; height: 18px; margin-top: ${(p) => p.$mt}px; letter-spacing: ${(p) => p.$ls || -0.05}px;`;
const CheckBox = styled.i`width: 18px; height: 18px; border: 1px solid #868686; border-radius: 3px; background: #fff; display: grid; place-items: center;`;
const AddAnother = styled.div`display: flex; align-items: center; justify-content: flex-end; gap: 4px; height: 23px; margin-top: 12px; padding-right: 8px; letter-spacing: -0.05px;`;
const RunButton = styled.div`
  display: flex; align-items: center; width: 105px; height: 30px; margin: 0 3px 8px auto; border: 1px solid #555; border-radius: 3px; background: #fff; padding: 0 3px 0 13px;
  span { margin: 0 auto 0 10px; }
`;
const Message = styled.div`
  display: flex; align-items: center; height: 57px; margin-right: -1px; background: #e3f0e3; padding: 0 8px 0 16px; letter-spacing: -0.1px;
  > div { margin: 0 auto 0 20px; line-height: 25px; }
`;
const Links = styled.div`display: flex; gap: 9px; color: #4ba0cf;`;
const PaneTabs = styled.div`display: flex; height: 26px; font-size: 15px; padding-left: 8px; letter-spacing: -0.32px; line-height: 25px;`;
const PaneTab = styled.div`
  width: ${(p) => p.$w}px;
  ${(p) => p.$on && 'background: #f8f8f8; color: #1273b8; border: 1px solid #c9d6e2; border-top: 0; border-radius: 0 0 4px 4px; padding-left: 6px; margin: -1px 8px 0 0;'}
`;
const GearSlot = styled.div`margin-left: -4px;`;

const Combo = ({ children, ...p }) => <Box {...p}>{children}<Chevron s={9} w={1.5} c="#666" /></Box>;

function Geoprocessing() {
  return (
    <RightColumn>
      <Pane>
        <PaneTitle>
          Geoprocessing
          <Chevron s={11} />
          <Icon w={10} h={14}><path d="M2.500 1h5v7h-5zM0 8.500h10M5 9v5" stroke="#444" strokeWidth="1.400" /><path d="M6 1h1.500v7H6z" fill="#444" /></Icon>
          <Cross c="#444" />
        </PaneTitle>
        <ToolHeader><CircleBack />Zonal Statistics as Table<CirclePlus /></ToolHeader>
        <ParamTabs><ParamTab $on $w={82}>Parameters</ParamTab><ParamTab $w={96}>Environments</ParamTab><Help>?</Help></ParamTabs>
        <Form>
          <FieldLabel>Input Raster or Feature Zone Data</FieldLabel>
          <FieldRow><Combo $w={250}>DOM_adm2</Combo><Folder /><Gap $w={15} /><Pencil /><Gap $w={5} /><Chevron s={9} c="#333" /></FieldRow>
          <Info>
            <Icon s={14}><circle cx="7" cy="7" r="7" fill="#4f9fd2" /><path d="M7 6v5M5 6.200h2M5 10.800h4" stroke="#fff" strokeWidth="1.500" /><circle cx="7" cy="3.300" r="1.100" fill="#fff" /></Icon>
            <span>The input has a selection. Records to be<br />processed: 12</span><Refresh />
          </Info>
          <FieldLabel $mt={1}>Zone Field</FieldLabel>
          <FieldRow><Combo $w={302}>NAME_2</Combo><GearSlot><Gear /></GearSlot></FieldRow>
          <FieldLabel $mt={7}>Input Value Raster</FieldLabel>
          <FieldRow><Combo $w={299}>NDVI</Combo><Folder /></FieldRow>
          <FieldLabel $mt={7} $warn>
            <Icon w={16} h={16}><path d="M8 1l7.300 14.300H.7z" fill="#f7c795" stroke="#eba866" /><path d="M8 5.500v5" stroke="#444" strokeWidth="1.800" /><circle cx="8" cy="12.800" r="1.100" fill="#444" /></Icon>
            Output Table
          </FieldLabel>
          <FieldRow><Box $w={299} $dim>ZonalSt_DOM_adm2</Box><Folder /></FieldRow>
          <CheckRow $mt={8}><CheckBox><Icon s={14}><path d="M2 7.500L5.500 11 12.500 2.500" stroke="#333" strokeWidth="2.400" /></Icon></CheckBox>Ignore NoData in Calculations</CheckRow>
          <FieldLabel $mt={7}>Statistics Type</FieldLabel>
          <Combo $w={332}>All</Combo>
          <FieldLabel $mt={7}>Percentile Values</FieldLabel>
          <Box $w={301} $ml={31} $right $dim>90</Box>
          <AddAnother><CirclePlus />Add another</AddAnother>
          <FieldLabel $mt={12}>Percentile Interpolation Type</FieldLabel>
          <Combo $w={332}>Auto-detect</Combo>
          <CheckRow $mt={7} $ls={-0.13}><CheckBox />Calculate Circular Statistics</CheckRow>
          <CheckRow $mt={8} $ls={-0.22}><CheckBox />Process as Multidimensional</CheckRow>
        </Form>
        <RunButton>
          <Icon><circle cx="10" cy="10" r="9.300" fill="#c9e5f7" stroke="#6fb3dc" /><path d="M7 5v10l7.500-5z" fill="#3a94cd" /></Icon>
          <span>Run</span><Chevron s={9} w={2} />
        </RunButton>
        <Message>
          <Icon s={16}><circle cx="8" cy="8" r="7.500" fill="#4fa564" /><path d="M4 8.300l2.800 2.800 5-5.800" stroke="#fff" strokeWidth="2" /></Icon>
          <div>Zonal Statistics as Table completed.<Links><span>View Details</span><span>Open History</span></Links></div>
          <Cross c="#8a8f8a" />
        </Message>
      </Pane>
      <PaneTabs><PaneTab $w={60}>Catalog</PaneTab><PaneTab $on $w={113}>Geoprocessing</PaneTab><PaneTab $w={80}>Symbology</PaneTab></PaneTabs>
    </RightColumn>
  );
}

export default function App() {
  return (
    <>
      <Global />
      <Shell>
        <Ribbon />
        <LeftColumn>
          <DocTabs>
            <DocTab $w={95} $gap={3}><MapTabIcon /><TabText $w={31}>Map</TabText><Cross /></DocTab>
            <Chevron s={11} />
          </DocTabs>
          <MapPane><MapCanvas /></MapPane>
          <StatusBar>
            <ScaleBox>1:525,030<Caret /></ScaleBox>
            <Rule $l={5} $r={8} />
            <StatusIcons>
              <Icon><path d="M1 1h13v13H1zM1 7.500h13M7.500 1v13" stroke="#999" strokeWidth="1.200" /><path d="M14.500 9v11M9 14.500h11" stroke="#f8f8f8" strokeWidth="5" /><path d="M14.500 10v10M9.500 15h10" stroke="#5b93bf" strokeWidth="2" /></Icon>
              <Icon><path d="M2 2h16v16H2zM2 6h16M2 10h16M2 14h16M6 2v16M10 2v16M14 2v16" stroke="#999" /></Icon>
              <Icon><path d="M1 3h5v3H1zM14 9h5v3h-5z" stroke="#555" strokeWidth="1.200" /><path d="M13 4h6M16 1v6" stroke="#555" strokeWidth="1.300" /><path d="M4 15L10 5l5 9M5 13l9-6" stroke="#58a5d6" strokeDasharray="2 1.500" strokeWidth="1.300" /><path d="M9 14h10v4H9z" fill="#c9e3f3" /><path d="M1 16h3v3H1z" fill="#3f8d5c" /><path d="M4 18h15" stroke="#777" /></Icon>
              <Icon><path d="M0 1h9v8H0z" fill="#d3ead3" /><path d="M10 0v8M10 13v7M0 10.500h8M12 10.500h8" stroke="#555" strokeWidth="1.500" strokeDasharray="1.500 1" /><path d="M8 8.500h4v4H8z" fill="#555" /></Icon>
              <Icon><path d="M1.200 14V6l6 8V6" stroke="#3f95cc" strokeWidth="2.200" /><path d="M10 0v20M10 19L20 7" stroke="#888" /><path d="M13 2c3 0 4 2 4 5M14 5l3 3.500L20 5" stroke="#58a5d6" strokeWidth="1.600" /></Icon>
              <Chevron c="#222" />
            </StatusIcons>
            <Rule $l={11} />
            <Coordinates>70.2242140°W 18.4667630°N<Chevron s={12} w={2} /></Coordinates>
            <Rule $l={8} $r={4} />
            <SelectedCount><Magnifier />Selected Features: 12</SelectedCount>
            <Rule $l={4} $r={11} />
            <Icon s={16}><path d="M1 1h14v14H1zM1 2l5 4 2 3-2 6M9 9l6-5M6 6l3-1 1-4" stroke="#777" strokeWidth="1.200" /></Icon>
            <Rule $l={11} $r={9} />
            <Pause />
            <Rule $l={11} $r={8} />
            <Refresh />
          </StatusBar>
          <TableDock />
        </LeftColumn>
        <Geoprocessing />
      </Shell>
    </>
  );
}
